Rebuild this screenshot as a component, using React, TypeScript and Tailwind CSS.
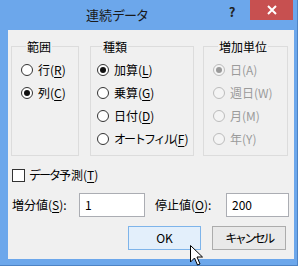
const jp = { fontFamily: '"Noto Sans CJK JP", "Noto Sans", sans-serif' };

function Radio({ label, keyChar, checked, disabled, narrow }: { label: string; keyChar?: string; checked?: boolean; disabled?: boolean; narrow?: boolean }) {
  return (
    <div className="flex h-[23px] items-center gap-[5px] whitespace-nowrap">
      <span
        className={`flex h-[12px] w-[12px] shrink-0 items-center justify-center rounded-full border ${
          disabled ? "border-[#bcbcbc] bg-[#f4f4f4]" : "border-[#333] bg-white"
        }`}
      >
        {checked && <span className={`h-[6px] w-[6px] rounded-full ${disabled ? "bg-[#9a9a9a]" : "bg-[#111]"}`} />}
      </span>
      <span className={`text-[12px] leading-none ${disabled ? "text-[#9b9b9b]" : "text-black"}`}>
        <span className={narrow ? "tracking-[-2px]" : ""}>{label}</span>
        {keyChar ? (
          <>
            (<u className="underline-offset-2">{keyChar}</u>)
          </>
        ) : null}
      </span>
    </div>
  );
}

function Group({ title, width, padLeft, children }: { title: string; width: string; padLeft: string; children: React.ReactNode }) {
  return (
    <fieldset className={`${width} h-[118px] border border-[#dcdcdc] ${padLeft}`}>
      <legend className="ml-[5px] px-[1px] text-[12px] leading-[17px] text-black">{title}</legend>
      <div className="pt-[3px]">{children}</div>
    </fieldset>
  );
}

export default function App() {
  return (
    <div className="relative h-[269px] w-[304px] overflow-hidden bg-white" style={jp}>
      <div className="flex h-[266px] w-[298px] flex-col border-r border-b border-[#4d83c4] bg-[#6ca7eb]">
        <div className="relative flex h-[30px] items-start">
          <div className="flex h-[30px] flex-1 items-center justify-center pl-[8px] text-[13px] text-[#1a1a1a]">
            連続<span className="tracking-[-1px]">データ</span>
          </div>
          <div className="flex h-[23px] w-[12px] items-center justify-center text-[13px] font-bold text-[#222]">?</div>
          <div className="ml-[12px] mr-[4px] flex h-[20px] w-[43px] items-center justify-center bg-[#c75050] text-white">
            <svg width="10" height="10" viewBox="0 0 10 10">
              <path d="M1 1 L9 9 M9 1 L1 9" stroke="white" strokeWidth="2" />
            </svg>
          </div>
        </div>
        <div className="ml-[8px] flex h-[229px] w-[286px] flex-col bg-[#f0f0f0] pt-[8px]">
          <div className="flex pl-[3px]">
            <Group title="範囲" width="w-[68px]" padLeft="pl-[9px]">
              <Radio label="行" keyChar="R" />
              <Radio label="列" keyChar="C" checked />
            </Group>
            <div className="ml-[11px]">
              <Group title="種類" width="w-[104px]" padLeft="pl-[6px]">
                <Radio label="加算" keyChar="L" checked />
                <Radio label="乗算" keyChar="G" />
                <Radio label="日付" keyChar="D" />
                <Radio label="オートフィル" keyChar="F" narrow />
              </Group>
            </div>
            <div className="ml-[9px]">
              <Group title="増加単位" width="w-[85px]" padLeft="pl-[9px]">
                <Radio label="日(A)" checked disabled />
                <Radio label="週日(W)" disabled />
                <Radio label="月(M)" disabled />
                <Radio label="年(Y)" disabled />
              </Group>
            </div>
          </div>

          <div className="mt-[11px] flex h-[16px] items-center gap-[4px] pl-[4px]">
            <span className="h-[13px] w-[13px] border border-[#333] bg-white" />
            <span className="text-[12px] leading-none text-black">
              <span className="tracking-[-2px]">データ</span>予測(<u className="underline-offset-2">T</u>)
            </span>
          </div>

          <div className="mt-[10px] flex h-[24px] items-center pl-[4px] text-[12px] text-black">
            <span className="w-[67px]">
              増分値(<u className="underline-offset-2">S</u>):
            </span>
            <div className="flex h-[24px] w-[66px] items-center border border-[#abadb3] bg-white pl-[5px]">1</div>
            <span className="ml-[10px] w-[71px]">
              停止値(<u className="underline-offset-2">O</u>):
            </span>
            <div className="flex h-[24px] w-[63px] items-center border border-[#abadb3] bg-white pl-[5px]">200</div>
          </div>

          <div className="mt-[9px] flex justify-end gap-[11px] pr-[8px] text-[12px] text-black">
            <button className="flex h-[24px] w-[73px] items-center justify-center border border-[#7eb4ea] bg-[#e3effb]">OK</button>
            <button className="flex h-[24px] w-[74px] items-center justify-center border border-[#acacac] bg-[#e9e9e9] tracking-[-2.5px]">
              キャンセル
            </button>
          </div>
        </div>
      </div>

      <svg className="absolute left-[190px] top-[245px]" width="14" height="22" viewBox="0 0 14 22">
        <path d="M0.5 0.5 L0.5 17 L4.5 13 L7.5 20 L10 19 L7 12 L12.5 12 Z" fill="white" stroke="black" strokeWidth="1" />
      </svg>
    </div>
  );
}
